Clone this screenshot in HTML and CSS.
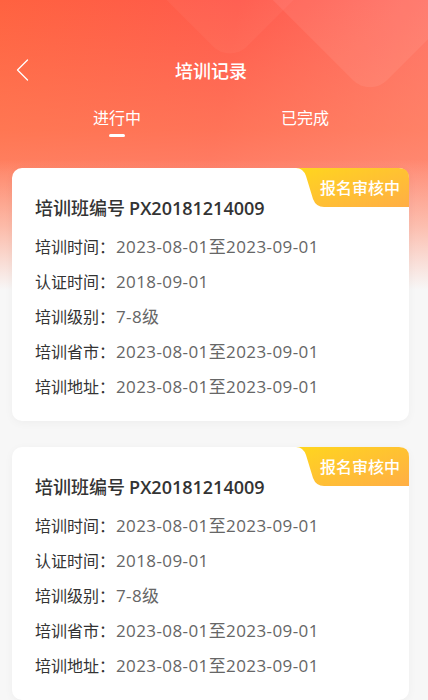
FILE: index.html
```html
<!DOCTYPE html>
<html lang="zh-CN">
<head>
  <meta charset="UTF-8">
  <meta name="viewport" content="width=device-width, initial-scale=1.0">
  <title>培训记录</title>
  <link rel="stylesheet" href="styles.css">
</head>
<body>

  <div class="header">
    <div class="deco deco-a"></div>
    <div class="deco deco-b"></div>

    <div class="nav">
      <span class="back">
        <svg width="13" height="22" viewBox="0 0 13 22"><path d="M11.5 1 L1.5 11 L11.5 21" fill="none" stroke="#fff" stroke-width="1.3" stroke-linecap="round" stroke-linejoin="round"/></svg>
      </span>
      <h1 class="title">培训记录</h1>
      <span></span>
    </div>

    <div class="tabs">
      <div class="tab active">进行中<i class="bar"></i></div>
      <div class="tab">已完成</div>
    </div>
  </div>

  <div class="list">
    <div class="card">
      <div class="badge">
        <svg class="badge-bg" width="113" height="39" viewBox="0 0 113 39">
          <defs>
            <linearGradient id="bg1" x1="0" y1="0" x2="1" y2="1">
              <stop offset="0" stop-color="#ffd61e"/>
              <stop offset="1" stop-color="#ffae45"/>
            </linearGradient>
          </defs>
          <path d="M0 0 H103 Q113 0 113 10 V39 H28 Q20 39 17 31 L10 8 Q7 0 0 0 Z" fill="url(#bg1)"/>
        </svg>
        <span class="badge-text">报名审核中</span>
      </div>
      <div class="card-title">培训班编号 <span class="num">PX20181214009</span></div>
      <div class="row"><span class="label">培训时间：</span><span class="value">2023-08-01至2023-09-01</span></div>
      <div class="row"><span class="label">认证时间：</span><span class="value">2018-09-01</span></div>
      <div class="row"><span class="label">培训级别：</span><span class="value">7-8级</span></div>
      <div class="row"><span class="label">培训省市：</span><span class="value">2023-08-01至2023-09-01</span></div>
      <div class="row"><span class="label">培训地址：</span><span class="value">2023-08-01至2023-09-01</span></div>
    </div>

    <div class="card">
      <div class="badge">
        <svg class="badge-bg" width="113" height="39" viewBox="0 0 113 39">
          <defs>
            <linearGradient id="bg2" x1="0" y1="0" x2="1" y2="1">
              <stop offset="0" stop-color="#ffd61e"/>
              <stop offset="1" stop-color="#ffae45"/>
            </linearGradient>
          </defs>
          <path d="M0 0 H103 Q113 0 113 10 V39 H28 Q20 39 17 31 L10 8 Q7 0 0 0 Z" fill="url(#bg2)"/>
        </svg>
        <span class="badge-text">报名审核中</span>
      </div>
      <div class="card-title">培训班编号 <span class="num">PX20181214009</span></div>
      <div class="row"><span class="label">培训时间：</span><span class="value">2023-08-01至2023-09-01</span></div>
      <div class="row"><span class="label">认证时间：</span><span class="value">2018-09-01</span></div>
      <div class="row"><span class="label">培训级别：</span><span class="value">7-8级</span></div>
      <div class="row"><span class="label">培训省市：</span><span class="value">2023-08-01至2023-09-01</span></div>
      <div class="row"><span class="label">培训地址：</span><span class="value">2023-08-01至2023-09-01</span></div>
    </div>
  </div>

</body>
</html>
```

FILE: styles.css
```css
body {
  margin: 0;
  font-family: "Noto Sans CJK SC", "Noto Sans", sans-serif;
  color: #333;
  background:
    linear-gradient(to bottom,
      rgba(247, 247, 247, 0) 55%,
      rgba(250, 225, 215, 0.6) 78%,
      #f7f7f7 100%) top / 100% 290px no-repeat,
    linear-gradient(to bottom,
      rgba(255, 140, 100, 0) 0%,
      rgba(255, 140, 100, 0.5) 45%,
      rgba(255, 150, 120, 0.6) 60%) top / 100% 290px no-repeat,
    linear-gradient(100deg, #ff6240 0%, #ff5a4c 50%, #ff7a6e 100%) top / 100% 290px no-repeat,
    #f7f7f7;
  overflow: hidden;
}

.header {
  position: relative;
  overflow: hidden;
  padding-top: 45px;
}

.deco {
  position: absolute;
  background: rgba(255, 255, 255, 0.07);
  border-radius: 24px;
  transform: rotate(45deg);
}

.deco-a {
  width: 170px;
  height: 170px;
  left: 285px;
  top: -108px;
}

.deco-b {
  width: 200px;
  height: 200px;
  left: 130px;
  top: -178px;
  background: rgba(255, 255, 255, 0.04);
}

.nav {
  position: relative;
  display: grid;
  grid-template-columns: 60px 1fr 66px;
  align-items: center;
  height: 50px;
}

.back {
  display: flex;
  padding-left: 16px;
}

.title {
  margin: 0;
  text-align: center;
  color: #fff;
  font-size: 18px;
  font-weight: 500;
}

.tabs {
  position: relative;
  display: flex;
  padding: 11px 29px 0 23px;
}

.tab {
  flex: 1;
  display: flex;
  flex-direction: column;
  align-items: center;
  color: #fff;
  font-size: 16px;
  line-height: 22px;
}

.bar {
  width: 16px;
  height: 3px;
  margin-top: 6px;
  border-radius: 2px;
  background: #fff;
}

.list {
  display: flex;
  flex-direction: column;
  gap: 26px;
  padding: 31px 19px 0 12px;
}

.card {
  position: relative;
  background: #fff;
  border-radius: 10px;
  padding: 26px 23px 17px;
  box-shadow: 0 2px 10px rgba(0, 0, 0, 0.04);
}

.badge {
  position: absolute;
  top: 0;
  right: 0;
  width: 113px;
  height: 39px;
}

.badge-bg {
  display: block;
}

.badge-text {
  position: absolute;
  right: 9px;
  top: 0;
  line-height: 39px;
  color: #fff;
  font-size: 16px;
  font-weight: 500;
}

.card-title {
  font-size: 18px;
  font-weight: 500;
  line-height: 26px;
  margin-bottom: 8px;
}

.num {
  font-family: "Open Sans", "Noto Sans CJK SC", sans-serif;
  font-weight: 600;
}

.row {
  display: flex;
  align-items: baseline;
  font-size: 16px;
  line-height: 35px;
}

.label {
  color: #333;
  width: 81px;
}

.value {
  color: #666;
  font-family: "Open Sans", "Noto Sans CJK SC", sans-serif;
  font-size: 17px;
  letter-spacing: 0.4px;
}
```
